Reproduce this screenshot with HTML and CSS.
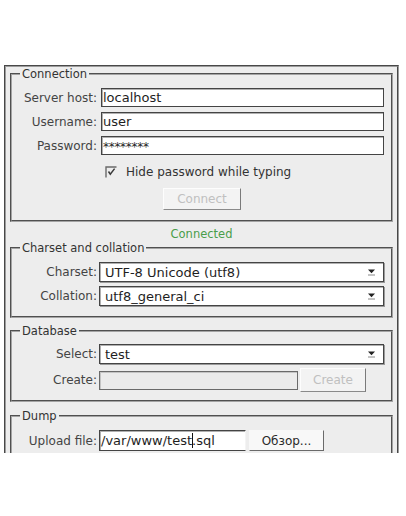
FILE: index.html
```html
<!DOCTYPE html>
<html>
<head>
<meta charset="utf-8">
<title>Connection</title>
<link rel="stylesheet" href="styles.css">
</head>
<body>
<div class="clip">
  <div class="panel">
    <fieldset class="group">
      <legend>Connection</legend>
      <div class="form">
        <span class="lbl">Server host:</span><div class="field">localhost</div>
        <span class="lbl">Username:</span><div class="field">user</div>
        <span class="lbl">Password:</span><div class="field pass">********</div>
        <div class="check-row">
          <svg class="check" width="12" height="12" viewBox="0 0 12 12"><path d="M1 11.5V1H11.5" fill="none" stroke="#6a6a6a" stroke-width="1.4"/><path d="M3.5 5.5L5.3 8.2L9.6 2.6" fill="none" stroke="#3a3a3a" stroke-width="1.5"/></svg>
          <span class="check-text">Hide password while typing</span>
        </div>
      </div>
      <div class="btn-row"><button class="btn btn-off btn-connect" disabled>Connect</button></div>
    </fieldset>

    <div class="status">Connected</div>

    <fieldset class="group">
      <legend>Charset and collation</legend>
      <div class="form form-tight">
        <span class="lbl">Charset:</span>
        <div class="select"><span>UTF-8 Unicode (utf8)</span><svg class="arrow" width="9" height="8" viewBox="0 0 9 8"><path d="M1 1.5H8L4.5 5.2Z" fill="#222"/><path d="M1 7H8" stroke="#888" stroke-width="1"/></svg></div>
        <span class="lbl">Collation:</span>
        <div class="select"><span>utf8_general_ci</span><svg class="arrow" width="9" height="8" viewBox="0 0 9 8"><path d="M1 1.5H8L4.5 5.2Z" fill="#222"/><path d="M1 7H8" stroke="#888" stroke-width="1"/></svg></div>
      </div>
    </fieldset>

    <fieldset class="group group-gap group-db">
      <legend>Database</legend>
      <div class="form form-tight">
        <span class="lbl">Select:</span>
        <div class="select"><span>test</span><svg class="arrow" width="9" height="8" viewBox="0 0 9 8"><path d="M1 1.5H8L4.5 5.2Z" fill="#222"/><path d="M1 7H8" stroke="#888" stroke-width="1"/></svg></div>
        <span class="lbl">Create:</span>
        <div class="ctl-row">
          <div class="field field-off field-create"></div>
          <button class="btn btn-off btn-create" disabled>Create</button>
        </div>
      </div>
    </fieldset>

    <fieldset class="group group-gap group-dump">
      <legend>Dump</legend>
      <div class="form form-tight">
        <span class="lbl">Upload file:</span>
        <div class="ctl-row ctl-row-upload">
          <div class="field field-upload">/var/www/test<span class="caret"></span>.sql</div>
          <button class="btn btn-browse">Обзор...</button>
        </div>
      </div>
    </fieldset>
  </div>
</div>
</body>
</html>
```

FILE: styles.css
```css
* {
  box-sizing: border-box;
}

body {
  margin: 0;
  background: #ffffff;
  font-family: "DejaVu Sans", "Liberation Sans", sans-serif;
}

.clip {
  height: 453px;
  overflow: hidden;
}

.panel {
  margin: 65px 0 0 4px;
  width: 395px;
  background: #ededed;
  border: 2px groove #9c9c9c;
  padding: 0 4px 20px;
}

.group {
  margin: 0;
  min-width: 0;
  border: 2px groove #a4a4a4;
  padding: 7px 7px 10px 8px;
}

.group-gap {
  margin-top: 6px;
}

.group-db {
  padding-top: 6px;
  padding-bottom: 8px;
}

.group-dump {
  margin-top: 7px;
}

legend {
  padding: 0 2px;
  font-size: 11.5px;
  line-height: 14px;
  color: #333;
}

.form {
  display: grid;
  grid-template-columns: 77px 1fr;
  column-gap: 4px;
  row-gap: 5px;
  align-items: center;
}

.form-tight {
  column-gap: 2px;
  row-gap: 4px;
}

.lbl {
  font-size: 12px;
  color: #444;
  text-align: right;
  white-space: nowrap;
}

.field {
  height: 19px;
  background: #fff;
  border: 1px solid #444;
  box-shadow: inset 1px 1px 0 #b0b0b0;
  font-size: 13px;
  line-height: 17px;
  padding: 0 1px;
  color: #1e1e1e;
  white-space: nowrap;
  overflow: hidden;
}

.pass {
  font-size: 12px;
  line-height: 21px;
  letter-spacing: -0.3px;
}

.field-off {
  background: #ebebeb;
  border-color: #6a6a6a;
  box-shadow: inset 1px 1px 0 #c4c4c4;
}

.field-create {
  width: 199px;
}

.field-upload {
  width: 147px;
  height: 21px;
  line-height: 19px;
  border-right-color: #f4f4f4;
}

.caret {
  display: inline-block;
  width: 1px;
  height: 15px;
  background: #111;
  vertical-align: -3px;
  margin-right: -1px;
}

.check-row {
  grid-column: 2;
  display: flex;
  align-items: center;
  height: 18px;
  margin-top: 3px;
  padding-left: 4px;
  gap: 9px;
}

.check {
  flex: none;
}

.check-text {
  font-size: 12px;
  color: #333;
}

.btn-row {
  display: flex;
  justify-content: center;
  margin-top: 7px;
}

.btn {
  font-family: "DejaVu Sans", "Liberation Sans", sans-serif;
  font-size: 12px;
  padding: 0;
  margin: 0;
  background: #f3f3f3;
  border: 1px solid;
  border-color: #fdfdfd #7a7a7a #8a8a8a #fdfdfd;
  color: #333;
}

.btn-off {
  color: #c0c0c0;
}

.btn-connect {
  width: 78px;
  height: 22px;
}

.btn-create {
  width: 66px;
  height: 24px;
}

.btn-browse {
  width: 75px;
  height: 21px;
  background: #f8f8f8;
  border-color: #f8f8f8 #6a6a6a #6a6a6a #f8f8f8;
  color: #2a2a2a;
}

.ctl-row {
  display: flex;
  align-items: center;
  gap: 2px;
}

.ctl-row-upload {
  gap: 3px;
}

.select {
  display: flex;
  align-items: center;
  justify-content: space-between;
  height: 20px;
  background: #fff;
  border: 1px solid #444;
  box-shadow: inset 1px 1px 0 #b0b0b0, 1px 1px 0 #9a9a9a;
  padding: 0 7px 0 5px;
  font-size: 13px;
  color: #1e1e1e;
  white-space: nowrap;
}

.arrow {
  flex: none;
}

.status {
  margin-top: 5px;
  height: 14px;
  line-height: 14px;
  font-size: 11.5px;
  color: #4a9d4a;
  text-align: center;
}
```
